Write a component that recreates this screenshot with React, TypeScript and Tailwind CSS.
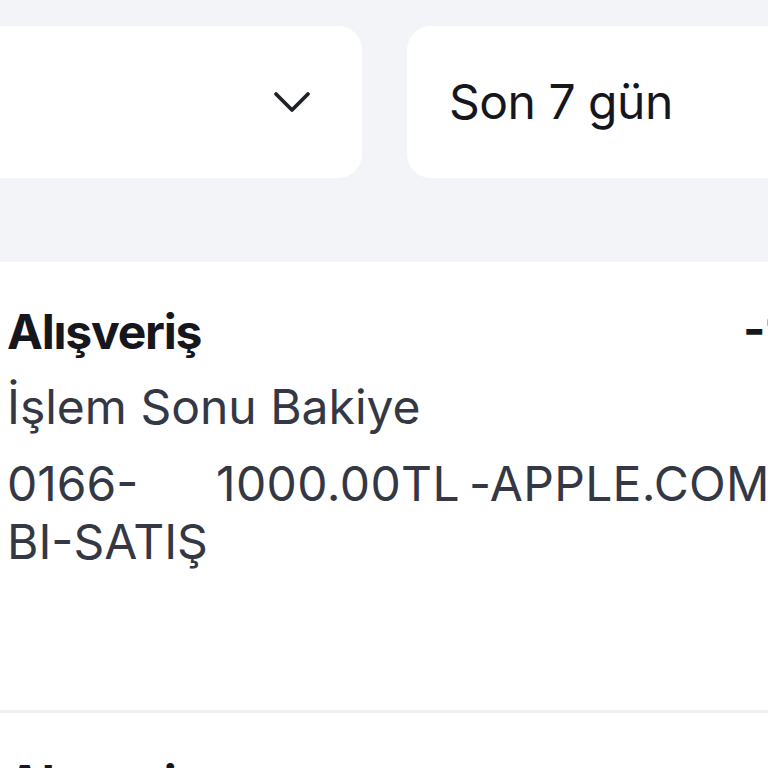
const font = { fontFamily: "Inter, 'Noto Sans', sans-serif" };

const Chevron = () => (
  <svg width="40" height="24" viewBox="0 0 40 24" fill="none">
    <path d="M4 4 L20 20 L36 4" stroke="#1f2128" strokeWidth="3.8" strokeLinecap="round" strokeLinejoin="round" />
  </svg>
);

const TxRow = ({ title, amount, lines }: { title: string; amount: string; lines?: boolean }) => (
  <div className={`bg-white pl-[7px] pt-[41px] ${lines ? "pb-[139px]" : "pb-[150px]"}`}>
    <div className="flex items-start">
      <div className="text-[48px] font-bold leading-[58px] tracking-[-1.2px] text-[#16171c]">{title}</div>
      <div className="ml-auto w-[25px] overflow-hidden whitespace-nowrap text-[48px] font-bold leading-[58px] text-[#16171c]">
        {amount}
      </div>
    </div>
    {lines && (
      <>
        <div className="mt-[17px] text-[48px] leading-[58px] text-[#343845]">İşlem Sonu Bakiye</div>
        <div className="mt-[19px] flex whitespace-nowrap text-[48px] leading-[58px] text-[#343845]">
          <span className="w-[209px] shrink-0">0166-</span>
          <span className="tracking-[0.4px]">1000.00TL</span>
          <span className="ml-[9px] tracking-[0.3px]">-APPLE.COM</span>
        </div>
        <div className="text-[48px] leading-[58px] text-[#343845]">BI-SATIŞ</div>
      </>
    )}
  </div>
);

export default function App() {
  return (
    <div className="h-[768px] w-[768px] overflow-hidden bg-[#f3f4f8]" style={font}>
      <div className="flex gap-[45px] pt-[26px]">
        <div className="-ml-[40px] flex h-[152px] w-[402px] shrink-0 items-center justify-end rounded-[24px] bg-white pr-[50px]">
          <Chevron />
        </div>
        <div className="flex h-[152px] w-[400px] shrink-0 items-center rounded-[24px] bg-white pl-[42px] text-[48px] tracking-[-0.5px] text-[#16171c]">
          Son 7 gün
        </div>
      </div>
      <div className="mt-[84px] flex flex-col gap-[3px] bg-[#eff0f3]">
        <TxRow title="Alışveriş" amount="-1.000,00 TL" lines />
        <TxRow title="Alışveriş" amount="-1.000,00 TL" />
      </div>
    </div>
  );
}
